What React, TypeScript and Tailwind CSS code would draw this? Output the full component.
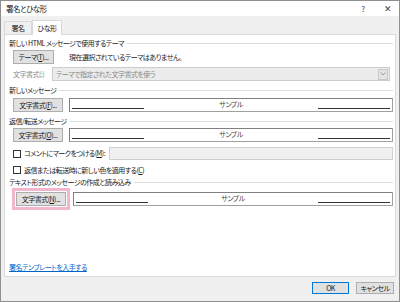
import React from "react";

const font = { fontFamily: '"Noto Sans CJK JP", "Noto Sans", sans-serif' };

function Btn({ k, pre, w = "w-[50px]" }: { k: string; pre: string; w?: string }) {
  return (
    <div
      className={`flex h-[14px] ${w} shrink-0 items-center justify-center whitespace-nowrap border border-[#adadad] bg-[#e1e1e1] leading-none text-[#1a1a1a]`}
    >
      {pre}(<span className="underline">{k}</span>)...
    </div>
  );
}

function Header({ text }: { text: string }) {
  return (
    <div className="flex h-[10px] items-center gap-[3px] leading-none text-[#1a1a1a]">
      <span className="whitespace-nowrap">{text}</span>
      <div className="h-px flex-1 bg-[#dcdcdc]" />
    </div>
  );
}

function Sample() {
  return (
    <div className="flex h-[14px] flex-1 items-end border border-[#a0a0a0] border-l-[#808080] border-t-[#808080] bg-white px-[2px] pb-[2px]">
      <div className="h-px w-[72px] bg-[#333]" />
      <div className="flex flex-1 justify-center self-center leading-none text-[#444]">サンプル</div>
      <div className="h-px w-[72px] bg-[#333]" />
    </div>
  );
}

function Check({ children }: { children: React.ReactNode }) {
  return (
    <div className="flex shrink-0 items-center gap-[3px] leading-none text-[#1a1a1a]">
      <div className="h-[8px] w-[8px] shrink-0 border border-[#333] bg-white" />
      <span className="whitespace-nowrap">{children}</span>
    </div>
  );
}

export default function App() {
  return (
    <div
      className="flex h-[302px] w-[400px] flex-col border border-[#8f8f8f] bg-[#f0f0f0] text-[7px] tracking-[-0.5px] [font-feature-settings:'palt']"
      style={font}
    >
      {/* title bar */}
      <div className="flex h-[15px] items-center bg-white pl-[5px] pr-[8px] leading-none text-[#1a1a1a]">
        <span className="text-[7.5px]">署名とひな形</span>
        <span className="ml-auto mr-[19px] text-[8px] text-[#444]">?</span>
        <span className="text-[9px] text-[#444]">✕</span>
      </div>

      {/* tabs */}
      <div className="mt-[4px] flex items-end pl-[3px] leading-none text-[#1a1a1a]">
        <div className="flex h-[13px] w-[28px] items-center justify-center border border-b-0 border-[#d9d9d9] bg-[#f0f0f0]">署名</div>
        <div className="relative -mb-px flex h-[15px] w-[30px] items-center justify-center border border-b-0 border-[#d9d9d9] bg-white">ひな形</div>
      </div>

      {/* panel */}
      <div className="mx-[3px] flex h-[243px] flex-col border border-[#d9d9d9] bg-white pl-[4px] pr-[2px] pt-[3px]">
        <Header text="新しい HTML メッセージで使用するテーマ" />
        <div className="mt-[2px] flex h-[14px] items-center pl-[4px]">
          <Btn pre="テーマ" k="T" w="w-[41px]" />
          <span className="ml-[15px] leading-none text-[#1a1a1a]">現在選択されているテーマはありません。</span>
        </div>
        <div className="mt-[3px] flex h-[14px] items-center pl-[4px] pr-[3px]">
          <span className="w-[39px] shrink-0 whitespace-nowrap leading-none text-[#8a8a8a]">文字書式(:)</span>
          <div className="flex h-[14px] flex-1 items-center border border-[#cccccc] bg-[#ececec] pl-[3px] leading-none text-[#8a8a8a]">
            <span>テーマで指定された文字書式を使う</span>
            <div className="ml-auto mr-px flex h-[11px] w-[10px] items-center justify-center border border-[#c8c8c8] bg-[#e4e4e4]">
              <svg width="6" height="4" viewBox="0 0 6 4"><path d="M0.5 0.5 L3 3 L5.5 0.5" fill="none" stroke="#9a9a9a" strokeWidth="1" /></svg>
            </div>
          </div>
        </div>

        <div className="mt-[4px]"><Header text="新しいメッセージ" /></div>
        <div className="mt-[3px] flex items-center gap-[6px] pl-[4px]">
          <Btn pre="文字書式" k="F" />
          <Sample />
        </div>

        <div className="mt-[4px]"><Header text="返信/転送メッセージ" /></div>
        <div className="mt-[2px] flex items-center gap-[6px] pl-[4px]">
          <Btn pre="文字書式" k="O" />
          <Sample />
        </div>

        <div className="mt-[4px] flex h-[15px] items-center pl-[4px]">
          <Check>コメントにマークをつける(<span className="underline">M</span>):</Check>
          <div className="ml-[4px] h-[13px] flex-1 border border-[#d0d0d0] bg-[#f0f0f0]" />
        </div>
        <div className="mt-[3px] flex h-[12px] items-center pl-[4px]">
          <Check>返信または転送時に新しい色を適用する(<span className="underline">C</span>)</Check>
        </div>

        <div className="mt-[1px]"><Header text="テキスト形式のメッセージの作成と読み込み" /></div>
        <div className="mt-[1px] flex items-center gap-[3px] pl-[3px]">
          <div className="shrink-0 border-[3px] border-[#f4b6cf] p-px">
            <Btn pre="文字書式" k="N" />
          </div>
          <Sample />
        </div>

        <div className="mb-[5px] mt-auto leading-none text-[#0066cc] underline">署名テンプレートを入手する</div>
      </div>

      {/* footer */}
      <div className="mt-[5px] flex justify-end gap-[7px] pr-[5px]">
        <div className="flex h-[12px] w-[37px] items-center justify-center whitespace-nowrap border border-[#0078d7] bg-[#e1e1e1] leading-none text-[#1a1a1a]">OK</div>
        <div className="flex h-[12px] w-[38px] items-center justify-center whitespace-nowrap border border-[#adadad] bg-[#e1e1e1] leading-none text-[#1a1a1a]">キャンセル</div>
      </div>
    </div>
  );
}
